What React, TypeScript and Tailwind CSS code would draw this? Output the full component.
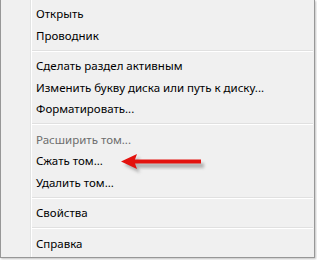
import React from 'react';

type Entry = { label: string; disabled?: boolean } | 'sep';

const entries: Entry[] = [
  { label: 'Открыть' },
  { label: 'Проводник' },
  'sep',
  { label: 'Сделать раздел активным' },
  { label: 'Изменить букву диска или путь к диску...' },
  { label: 'Форматировать...' },
  'sep',
  { label: 'Расширить том...', disabled: true },
  { label: 'Сжать том...' },
  { label: 'Удалить том...' },
  'sep',
  { label: 'Свойства' },
  'sep',
  { label: 'Справка' },
];

function Arrow() {
  return (
    <svg className="absolute left-[112px] top-[148px]" width="100" height="30" viewBox="0 0 100 30">
      <defs>
        <filter id="blur" x="-10%" y="-50%" width="120%" height="200%">
          <feGaussianBlur stdDeviation="1.4" />
        </filter>
      </defs>
      {/* shadow */}
      <polygon
        points="11,17 27,9 25,15 91,15 91,20 25,20 27,25"
        fill="#808080"
        opacity="0.55"
        filter="url(#blur)"
      />
      <polygon points="8,13.5 24,6 22,11.5 88,11.5 88,15.5 22,15.5 24,21" fill="#e3120e" />
    </svg>
  );
}

export default function App() {
  return (
    <div className="w-[317px] h-[260px] bg-white" style={{ fontFamily: '"Noto Sans", "Open Sans", sans-serif' }}>
      <div className="relative w-[315px] h-[258px] border-l border-r border-b border-[#979797] bg-[#f0f0f0] shadow-[1px_1px_2px_rgba(0,0,0,0.25)]">
        {/* gutter line */}
        <div className="absolute left-[29px] top-0 bottom-0 w-[2px] border-l border-[#e2e3e3] bg-white" />
        <div className="flex flex-col pt-[3.25px]">
          {entries.map((e, i) =>
            e === 'sep' ? (
              <div key={i} className="h-[9px] flex flex-col justify-center pl-[31px] pr-[1px]">
                <div className="h-px bg-[#e0e0e0]" />
                <div className="h-px bg-white" />
              </div>
            ) : (
              <div
                key={i}
                className={`h-[21.5px] flex items-center pl-[35px] text-[11.5px] leading-none ${
                  e.disabled ? 'text-[#6d6d6d]' : 'text-black'
                }`}
              >
                {e.label}
              </div>
            )
          )}
        </div>
        <Arrow />
      </div>
    </div>
  );
}
